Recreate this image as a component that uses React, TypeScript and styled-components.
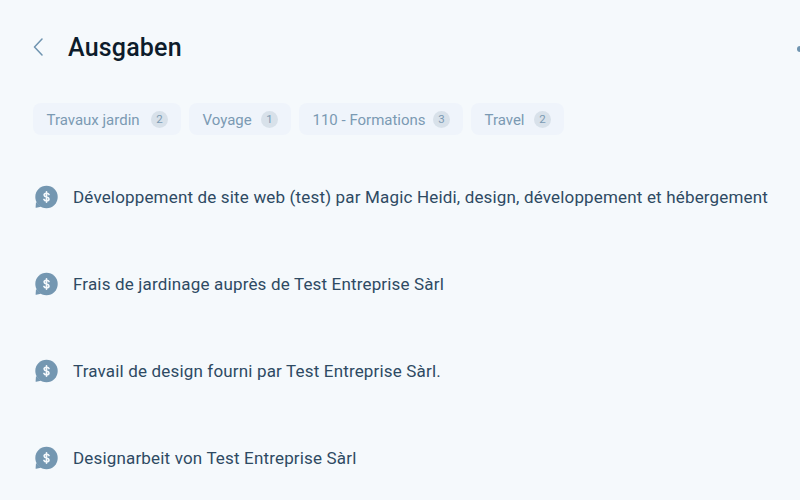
import React from "react";
import styled, { createGlobalStyle } from "styled-components";

const Global = createGlobalStyle`
  html, body { margin: 0; padding: 0; background: #f5f9fc; }
  body { font-family: Roboto, "Liberation Sans", sans-serif; overflow: hidden; }
`;

const Page = styled.div`
  width: 800px;
  height: 500px;
  overflow: hidden;
  box-sizing: border-box;
  padding: 26px 0 0 33px;
  background: #f5f9fc;
`;

const Header = styled.header`
  display: flex;
  align-items: center;
  height: 44px;
  position: relative;
  width: 767px;
`;

const Back = styled.span`
  display: flex;
  width: 35px;
  color: #6f94b0;
  margin-top: -2px;
`;

const Title = styled.h1`
  margin: 0;
  font-size: 25px;
  line-height: 44px;
  font-weight: 500;
  color: #0d1c2b;
  letter-spacing: 0.2px;
`;

const Dot = styled.span`
  position: absolute;
  right: -3px;
  top: 20px;
  width: 6px;
  height: 6px;
  border-radius: 50%;
  background: #6f94b0;
`;

const Chips = styled.div`
  display: flex;
  gap: 8px;
  margin-top: 33px;
`;

const Chip = styled.div<{ $w: number }>`
  display: flex;
  align-items: center;
  justify-content: space-between;
  box-sizing: border-box;
  width: ${(p) => p.$w}px;
  height: 32px;
  padding: 0 13px 0 13.5px;
  border-radius: 8px;
  background: #eff4fb;
  color: #7b9ab3;
  font-size: 15px;
`;

const ChipLabel = styled.span`
  position: relative;
  top: 1px;
`;

const Count = styled.span`
  display: flex;
  align-items: center;
  justify-content: center;
  width: 17px;
  height: 17px;
  border-radius: 50%;
  background: #d8e1ea;
  color: #7b9ab3;
  font-size: 11.5px;
`;

const List = styled.ul`
  list-style: none;
  margin: 47px 0 0;
  padding: 0;
  display: flex;
  flex-direction: column;
  gap: 57px;
`;

const Row = styled.li`
  display: flex;
  align-items: center;
  gap: 14px;
  height: 30px;
  color: #2e4a63;
  font-size: 17px;
  letter-spacing: 0.165px;
  white-space: nowrap;
`;

const Bubble = () => (
  <svg width="26" height="26" viewBox="0 0 26 26" style={{ flex: "none" }}>
    <circle cx="13.5" cy="13" r="11.2" fill="#7497b1" />
    <path d="M3 18L2.6 23.2a.5.5 0 0 0 .6.5L8 22.8z" fill="#7497b1" />
    <path d="M16 10.6c-.3-.9-1.2-1.4-2.5-1.4-1.4 0-2.4.7-2.4 1.8s.9 1.6 2.4 2 2.5.8 2.5 2-1.1 1.8-2.5 1.8c-1.3 0-2.2-.5-2.6-1.4M13.5 7.8v10.4" fill="none" stroke="#f5f9fc" strokeWidth="1.6" strokeLinecap="round" />
  </svg>
);

const chips = [
  { label: "Travaux jardin", n: 2, w: 148 },
  { label: "Voyage", n: 1, w: 102 },
  { label: "110 - Formations", n: 3, w: 164 },
  { label: "Travel", n: 2, w: 93 },
];

const rows = [
  "Développement de site web (test) par Magic Heidi, design, développement et hébergement",
  "Frais de jardinage auprès de Test Entreprise Sàrl",
  "Travail de design fourni par Test Entreprise Sàrl.",
  "Designarbeit von Test Entreprise Sàrl",
];

export default function App() {
  return (
    <Page>
      <Global />
      <Header>
        <Back>
          <svg width="10" height="18" viewBox="0 0 10 18" fill="none" stroke="currentColor" strokeWidth="1.5" strokeLinecap="round" strokeLinejoin="round">
            <path d="M9 1L1.5 9 9 17" />
          </svg>
        </Back>
        <Title>Ausgaben</Title>
        <Dot />
      </Header>
      <Chips>
        {chips.map((c) => (
          <Chip key={c.label} $w={c.w}>
            <ChipLabel>{c.label}</ChipLabel>
            <Count>{c.n}</Count>
          </Chip>
        ))}
      </Chips>
      <List>
        {rows.map((r) => (
          <Row key={r}>
            <Bubble />
            <span>{r}</span>
          </Row>
        ))}
      </List>
    </Page>
  );
}
